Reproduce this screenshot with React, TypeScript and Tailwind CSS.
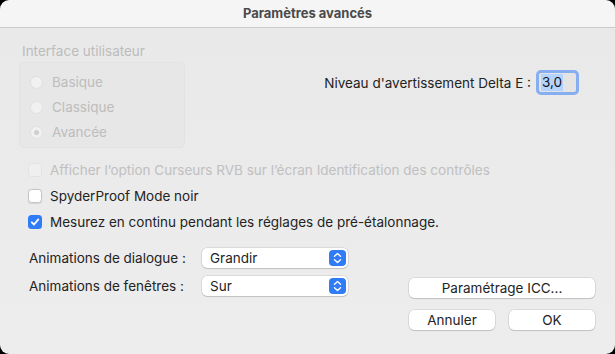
import React from "react";

const font = { fontFamily: "Inter, 'Noto Sans', sans-serif" };

function Radio({ label, checked = false }: { label: string; checked?: boolean }) {
  return (
    <div className="flex items-center h-[25px] pl-[10px] gap-[9px]">
      <span className="w-[13px] h-[13px] rounded-full border border-[#e0e0e0] bg-[#f1f1f1] flex items-center justify-center">
        {checked && <span className="w-[5px] h-[5px] rounded-full bg-[#cfcfcf]" />}
      </span>
      <span className="text-[13.5px] text-[#bdbdbd]">{label}</span>
    </div>
  );
}

function Checkbox({
  label,
  checked = false,
  disabled = false,
}: {
  label: string;
  checked?: boolean;
  disabled?: boolean;
}) {
  return (
    <div className="flex items-center h-[26px] gap-[8px]">
      {checked ? (
        <span className="w-[14px] h-[14px] rounded-[3.5px] bg-[#2f7cf6] flex items-center justify-center">
          <svg width="10" height="10" viewBox="0 0 10 10" fill="none">
            <path d="M1.8 5.3 L4 7.5 L8.3 2.4" stroke="white" strokeWidth="1.8" strokeLinecap="round" strokeLinejoin="round" />
          </svg>
        </span>
      ) : (
        <span
          className={
            disabled
              ? "w-[14px] h-[14px] rounded-[3.5px] border border-[#e2e2e2] bg-[#efefef]"
              : "w-[14px] h-[14px] rounded-[3.5px] border border-[#c4c4c4] bg-white shadow-[0_0.5px_1px_rgba(0,0,0,0.1)]"
          }
        />
      )}
      <span className={disabled ? "text-[13.5px] text-[#c0c0c0]" : "text-[13.5px] text-[#232323]"}>{label}</span>
    </div>
  );
}

function Select({ label, value }: { label: string; value: string }) {
  return (
    <div className="flex items-center h-[20px]">
      <span className="w-[173px] text-[13.5px] text-[#232323]">{label}</span>
      <div className="w-[146px] h-[20px] rounded-[5px] bg-white shadow-[0_0_0_0.5px_rgba(0,0,0,0.15),0_1px_1px_rgba(0,0,0,0.12)] flex items-center justify-between pl-[8px] pr-[2px]">
        <span className="text-[13.5px] text-[#232323]">{value}</span>
        <span className="w-[17px] h-[16px] rounded-[4px] bg-[#2f7cf6] flex items-center justify-center">
          <svg width="9" height="12" viewBox="0 0 9 12" fill="none">
            <path d="M1.5 4.3 L4.5 1.5 L7.5 4.3" stroke="white" strokeWidth="1.4" strokeLinecap="round" strokeLinejoin="round" />
            <path d="M1.5 7.7 L4.5 10.5 L7.5 7.7" stroke="white" strokeWidth="1.4" strokeLinecap="round" strokeLinejoin="round" />
          </svg>
        </span>
      </div>
    </div>
  );
}

function Button({ children, className = "" }: { children: React.ReactNode; className?: string }) {
  return (
    <div
      className={
        "h-[20px] rounded-[5px] bg-white shadow-[0_0_0_0.5px_rgba(0,0,0,0.15),0_1px_1px_rgba(0,0,0,0.12)] flex items-center justify-center text-[13.5px] text-[#232323] " +
        className
      }
    >
      {children}
    </div>
  );
}

export default function App() {
  return (
    <div className="w-[615px] h-[354px] bg-black" style={font}>
      <div className="w-full h-full rounded-[9px] overflow-hidden flex flex-col">
        <div className="h-[28px] bg-[#f5f5f5] border-b border-[#cacaca] flex items-center justify-center">
          <span className="text-[13px] font-bold text-[#4a4a4a]">Paramètres avancés</span>
        </div>

        <div className="flex-1 bg-gradient-to-b from-[#e9e9e9] to-[#ededed] pl-[19px] pr-[20px] pt-[14px]">
          <div className="flex justify-between">
            <div className="flex flex-col">
              <span className="h-[16px] pl-[3px] text-[13.5px] leading-[18px] text-[#bcbcbc]">Interface utilisateur</span>
              <div className="mt-[4px] w-[166px] h-[86px] rounded-[5px] border border-[#e2e2e2] bg-[#e7e7e7] pt-[7px]">
                <Radio label="Basique" />
                <Radio label="Classique" />
                <Radio label="Avancée" checked />
              </div>
            </div>

            <div className="mt-[28px] mr-[16px] flex items-center h-[25px] gap-[5px]">
              <span className="text-[13.5px] text-[#232323] pt-[2px]">Niveau d'avertissement Delta E :</span>
              <div className="w-[43px] h-[25px] rounded-[5px] border-[3px] border-[#86aef0] bg-[#e4e4e4] flex items-center pl-[2px]">
                <span className="bg-[#b4d4ff] h-[17px] px-[1px] flex items-center text-[13.5px] text-[#111]">3,0</span>
              </div>
            </div>
          </div>

          <div className="mt-[9px] pl-[9px] flex flex-col">
            <Checkbox label="Afficher l’option Curseurs RVB sur l’écran Identification des contrôles" disabled />
            <Checkbox label="SpyderProof Mode noir" />
            <Checkbox label="Mesurez en continu pendant les réglages de pré-étalonnage." checked />
          </div>

          <div className="flex justify-between">
            <div className="mt-[13px] pl-[10px] flex flex-col gap-[8px]">
              <Select label="Animations de dialogue :" value="Grandir" />
              <Select label="Animations de fenêtres :" value="Sur" />
            </div>
            <div className="mt-[43px] w-[186px] flex flex-col gap-[12px]">
              <Button>Paramétrage ICC...</Button>
              <div className="flex gap-[14px]">
                <Button className="w-[86px]">Annuler</Button>
                <Button className="w-[86px]">OK</Button>
              </div>
            </div>
          </div>
        </div>
      </div>
    </div>
  );
}
